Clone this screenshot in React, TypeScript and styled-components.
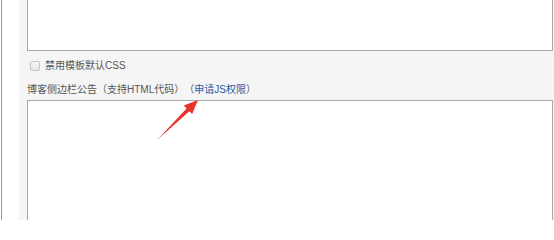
import React from 'react';
import styled, { createGlobalStyle } from 'styled-components';

const GlobalStyle = createGlobalStyle`
  html, body {
    margin: 0;
    padding: 0;
    background: #fff;
    overflow: hidden;
  }
  body {
    font-family: "Liberation Sans", "Noto Sans CJK SC", sans-serif;
    text-spacing-trim: space-all;
  }
`;

const Page = styled.div`
  position: relative;
  display: flex;
  width: 554px;
  height: 220px;
`;

const Gutter = styled.div`
  margin-left: 1px;
  width: 17px;
  border-left: 1px solid #9a9a9a;
  background: #fff;
`;

const Panel = styled.div`
  flex: 1;
  display: flex;
  flex-direction: column;
  background: #f5f5f5;
  padding-left: 8px;
  padding-right: 1px;
`;

const Area = styled.div<{ $height: number; $gap?: number; $cut?: boolean }>`
  box-sizing: border-box;
  height: ${(p) => p.$height}px;
  margin-top: ${(p) => p.$gap ?? 0}px;
  background: #fff;
  border: 1px solid #a8a8a8;
  border-top-width: ${(p) => (p.$cut ? 0 : 1)}px;
  flex-shrink: 0;
`;

const OptionRow = styled.label`
  display: flex;
  align-items: center;
  gap: 5px;
  margin-top: 9px;
  padding-left: 3px;
  height: 12px;
  font-size: 10px;
  line-height: 12px;
  color: #555;
`;

const Box = styled.span`
  box-sizing: border-box;
  width: 10px;
  height: 10px;
  border: 1px solid #c4c4c4;
  border-radius: 2px;
  background: linear-gradient(#f7f7f7, #e4e4e4);
`;

const FieldLabel = styled.div`
  margin-top: 12px;
  height: 12px;
  font-size: 10px;
  line-height: 12px;
  color: #555;
  white-space: nowrap;
  text-spacing-trim: space-all;
`;

const Link = styled.a`
  color: #1d5aa6;
  text-decoration: none;
`;

const Arrow = styled.svg`
  position: absolute;
  left: 150px;
  top: 95px;
`;

export default function App() {
  return (
    <>
      <GlobalStyle />
      <Page>
        <Gutter />
        <Panel>
          <Area $height={51} $cut />
          <OptionRow>
            <Box />
            禁用模板默认CSS
          </OptionRow>
          <FieldLabel>
            博客侧边栏公告（支持HTML代码）（<Link href="#">申请JS权限</Link>）
          </FieldLabel>
          <Area $height={150} $gap={4} />
        </Panel>
        <Arrow width="55" height="50" viewBox="0 0 55 50">
          <polygon
            points="7,45 36.6,13.4 33.8,10.5 48,5 42.2,19.1 39.4,16.2"
            fill="#e8322d"
          />
        </Arrow>
      </Page>
    </>
  );
}
